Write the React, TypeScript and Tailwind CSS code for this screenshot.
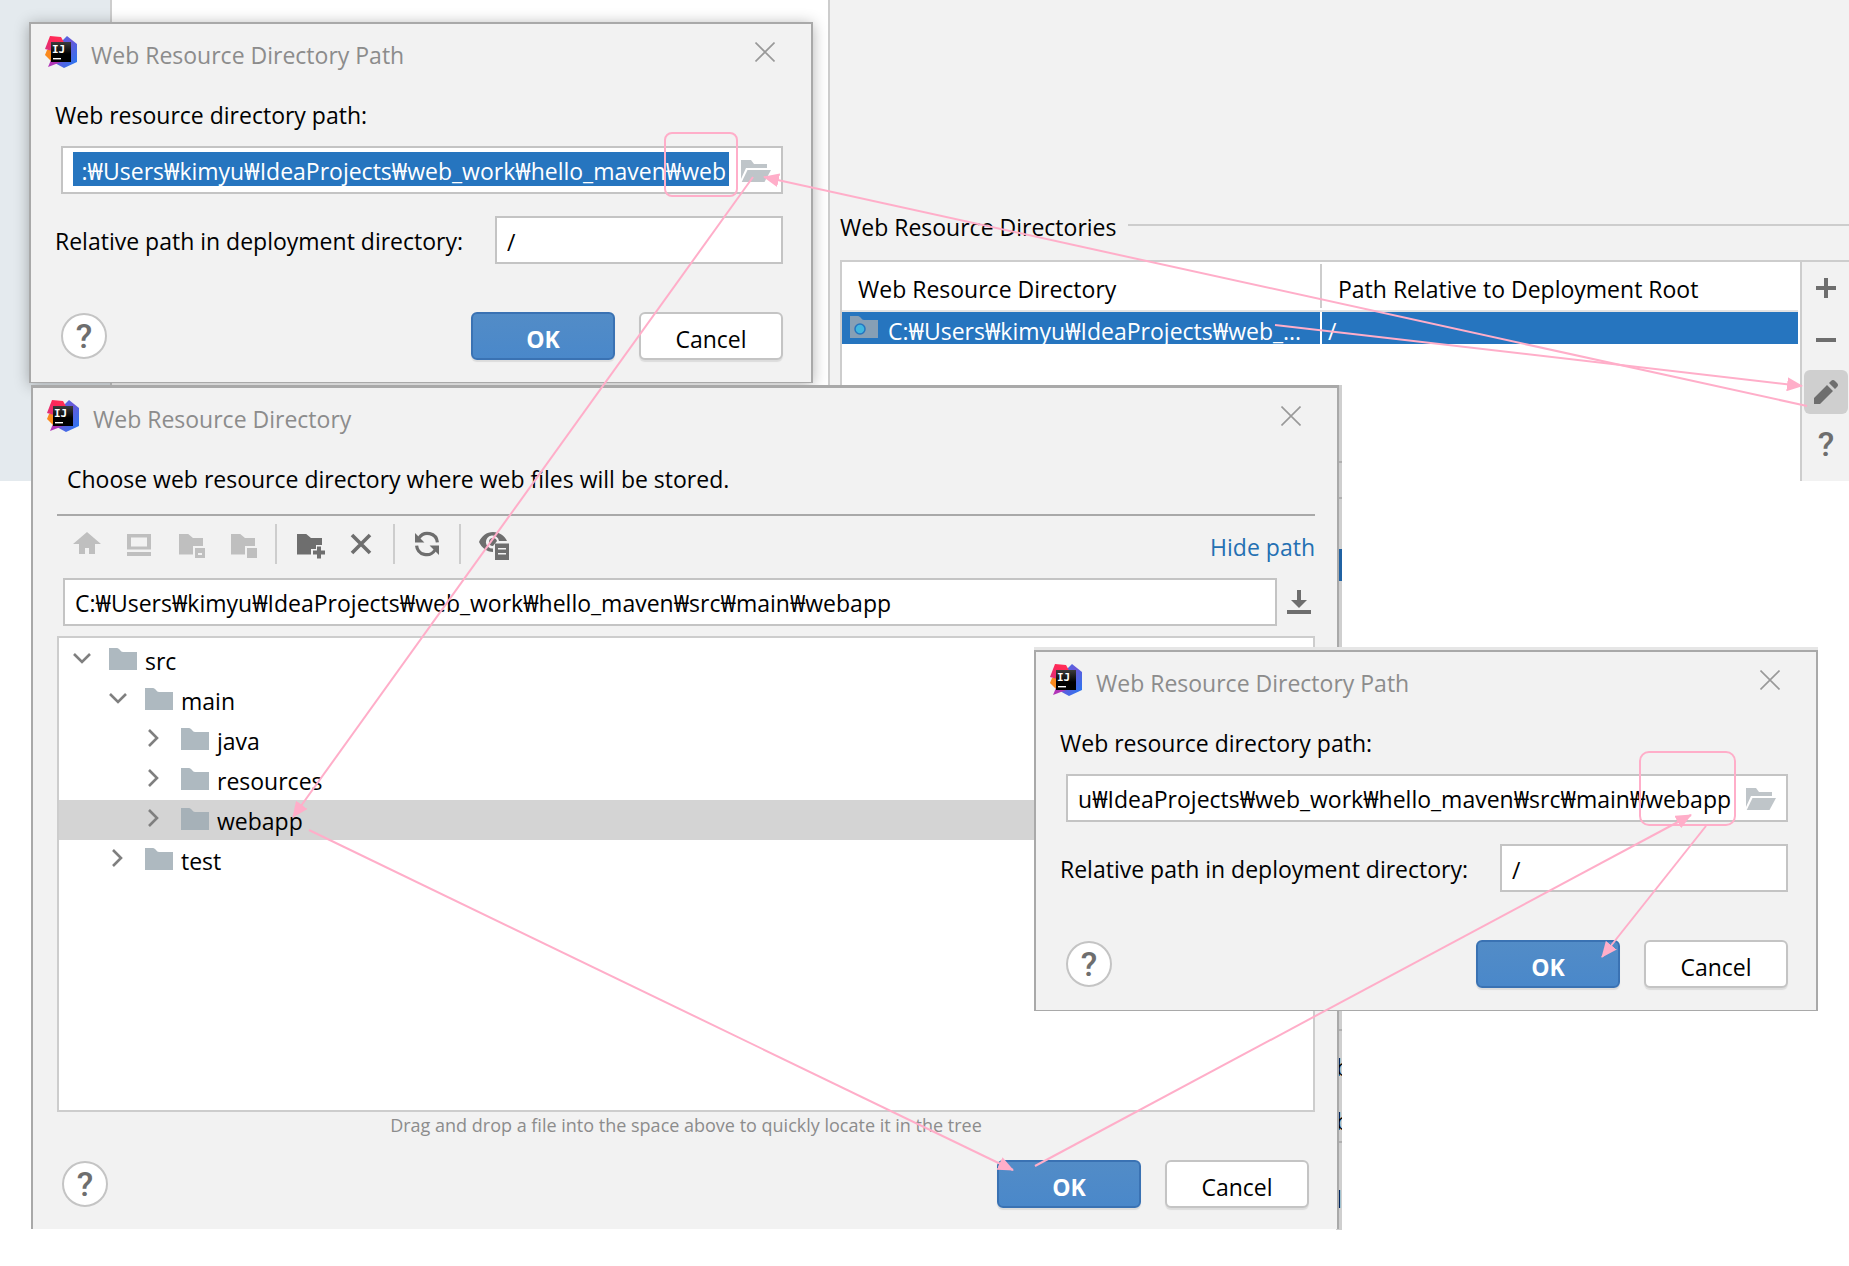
import { useEffect, useRef } from "react";
import type { ReactNode } from "react";

interface TreeRow {
  name: string;
  depth: number;
  open?: boolean;
  selected?: boolean;
}

const tree: TreeRow[] = [
  { name: "src", depth: 0, open: true },
  { name: "main", depth: 1, open: true },
  { name: "java", depth: 2 },
  { name: "resources", depth: 2 },
  { name: "webapp", depth: 2, selected: true },
  { name: "test", depth: 1 },
];

const indent = ["pl-[13px]", "pl-[49px]", "pl-[85px]"];

const arrows = [
  [1275, 325, 1802, 386],
  [1807, 406, 764, 177],
  [753, 177, 293, 817],
  [309, 830, 1013, 1170],
  [1035, 1166, 1691, 815],
  [1706, 826, 1602, 957],
];

function Logo() {
  return (
    <svg width="32" height="32" viewBox="0 0 32 32" aria-hidden="true">
      <defs>
        <linearGradient id="ij-blue" x1="0" y1="0" x2="1" y2="1">
          <stop offset="0" stopColor="#2f7df0" />
          <stop offset="0.45" stopColor="#6b57d8" />
          <stop offset="1" stopColor="#1f7cf5" />
        </linearGradient>
        <linearGradient id="ij-red" x1="0" y1="1" x2="1" y2="0">
          <stop offset="0" stopColor="#d8307f" />
          <stop offset="0.6" stopColor="#ff2857" />
          <stop offset="1" stopColor="#ff3558" />
        </linearGradient>
        <linearGradient id="ij-black" x1="0" y1="0" x2="0" y2="1">
          <stop offset="0" stopColor="#3c3c3c" />
          <stop offset="0.6" stopColor="#000" />
        </linearGradient>
      </defs>
      <path d="M17 5 22 0 32 8V26L19 32 8 26Z" fill="url(#ij-blue)" />
      <path d="M6 24 3 31 16 26Z" fill="#b135b8" />
      <path d="M2 14 0 19 6 25V14Z" fill="#fb8a1e" />
      <path d="M5 0 16 1 20 8 7 15 0 13Z" fill="url(#ij-red)" />
      <path d="M6 6h20v20H6z" fill="url(#ij-black)" />
      <text x="7" y="17" fill="#fff" fontSize="11" fontWeight="700" fontFamily="DejaVu Sans Mono, monospace">
        IJ
      </text>
      <path d="M8 22h8v1.4H8z" fill="#fff" />
    </svg>
  );
}

function Folder() {
  return (
    <svg width="28" height="22" viewBox="0 0 28 22" className="shrink-0" aria-hidden="true">
      <path d="M0 0h8c2.500 0 3.500 4 6 4h14v18H0z" fill="#9aa7b0" fillOpacity="0.8" />
    </svg>
  );
}

function OpenFolder() {
  return (
    <svg width="30" height="22" viewBox="0 0 30 22" aria-hidden="true">
      <path d="M0 0h10l3 4h13v4H5L0 19z" fill="#bfc5c9" />
      <path d="M6.500 10H30l-6.500 12H.7z" fill="#bfc5c9" />
    </svg>
  );
}

function ToolButton({ label, color, children }: { label: string; color: string; children: ReactNode }) {
  return (
    <button aria-label={label} className="size-8">
      <svg width="32" height="32" viewBox="0 0 16 16" fill={color} aria-hidden="true">
        {children}
      </svg>
    </button>
  );
}

function Divider() {
  return <span className="mx-4 h-10 w-0.5 bg-[#cdcdcd]" />;
}

function TitleBar({ title }: { title: string }) {
  return (
    <header className="mt-3 flex h-8 items-start pr-[36px] pl-[14px]">
      <Logo />
      <h2 className="mt-[3px] ml-[14px] flex-1 text-[#8c8c8c]">{title}</h2>
      <button aria-label="Close" className="mt-1.5">
        <svg width="20" height="20" viewBox="0 0 20 20" stroke="#999" strokeWidth="1.600" aria-hidden="true">
          <path d="M.5.5l19 19M19.500.5l-19 19" />
        </svg>
      </button>
    </header>
  );
}

function DialogButtons() {
  return (
    <div className="flex items-center">
      <button
        aria-label="Help"
        className="flex size-[46px] items-center justify-center rounded-full border-2 border-[#c4c4c4] bg-white font-[Roboto] text-[34px] font-medium text-[#6e6e6e]"
      >
        ?
      </button>
      <button className="ml-auto h-12 w-36 rounded-md border-2 border-[#3a72b3] bg-linear-to-b from-[#528cc7] to-[#4a88ca] pt-1.5 font-bold text-white shadow-[0_2px_1px_#dcdcdc]">
        OK
      </button>
      <button className="ml-6 h-12 w-36 rounded-md border-2 border-[#c4c4c4] bg-white pt-1.5 shadow-[0_2px_1px_#dcdcdc]">
        Cancel
      </button>
    </div>
  );
}

interface PathDialogProps {
  id: string;
  path: string;
  selected?: boolean;
}

function PathDialog({ id, path, selected }: PathDialogProps) {
  const input = useRef<HTMLInputElement>(null);

  // long paths show their tail, as after typing
  useEffect(() => {
    if (input.current) input.current.scrollLeft = input.current.scrollWidth;
  }, []);

  return (
    <div className="w-[784px] border-2 border-b border-[#a9a9a9] bg-[#f2f2f2] pb-[22px]">
      <TitleBar title="Web Resource Directory Path" />
      <div className="mt-[31px] pr-[28px] pl-6">
        <label htmlFor={`${id}-path`} className="block">
          Web resource directory path:
        </label>
        <div className="mt-[15px] ml-1.5 flex h-12 items-start border-2 border-[#c4c4c4] bg-white pt-1 pr-[10px] pl-[10px]">
          <input
            id={`${id}-path`}
            ref={input}
            defaultValue={path}
            className={
              selected
                ? "h-[34px] w-[656px] bg-[#2675bf] pt-1 pr-[3px] text-right text-white outline-none"
                : "h-[34px] w-[656px] bg-white pt-1 pr-[3px] text-right outline-none"
            }
          />
          <button aria-label="Browse" className="mt-2 ml-3">
            <OpenFolder />
          </button>
        </div>
        <div className="mt-[22px] flex items-center">
          <label htmlFor={`${id}-rel`} className="pt-0.5">
            Relative path in deployment directory:
          </label>
          <input
            id={`${id}-rel`}
            defaultValue="/"
            className="ml-auto h-12 w-[288px] border-2 border-[#c4c4c4] bg-white px-[10px] pt-[3px] outline-none"
          />
        </div>
        <div className="mt-12 ml-1.5">
          <DialogButtons />
        </div>
      </div>
    </div>
  );
}

function Chevron({ open }: { open?: boolean }) {
  return (
    <svg width="20" height="20" viewBox="0 0 20 20" fill="none" stroke="#7f7f7f" strokeWidth="2.600" aria-hidden="true">
      <path d={open ? "M2 6l8 8 8-8" : "M5 2l8 8-8 8"} />
    </svg>
  );
}

function DirectoryDialog() {
  return (
    <div className="w-[1308px] border-x-2 border-t-3 border-[#a9a9a9] bg-[#f2f2f2] pb-[21px]">
      <TitleBar title="Web Resource Directory" />
      <p className="mt-[31px] ml-[34px]">Choose web resource directory where web files will be stored.</p>
      <div className="mt-[19px] mr-[22px] ml-6 border-t-2 border-[#a9a9a9]">
        <div className="flex h-14 items-center pl-[14px]">
          <div className="flex gap-5">
            <ToolButton label="Home" color="#bfbfbf">
              <path d="M8 2l7 6h-3v5H9v-3H7v3H4V8H1z" />
            </ToolButton>
            <ToolButton label="Desktop" color="#bfbfbf">
              <path fillRule="evenodd" d="M2 3h12v7.700H2zM4 4.700v4.500h8V4.700z" />
              <path d="M2 12h12v2H2z" />
            </ToolButton>
            <ToolButton label="Project directory" color="#bfbfbf">
              <path d="M2 3h4.600L9 5h5v4H9v4.300H2z" />
              <path fillRule="evenodd" d="M10 10h5v5h-5zM11.500 12.500v1H13.500v-1z" />
            </ToolButton>
            <ToolButton label="Module directory" color="#bfbfbf">
              <path d="M2 3h4.600L9 5h5v4H9v4.300H2z" />
              <path d="M10 10h5v5h-5z" />
            </ToolButton>
          </div>
          <Divider />
          <div className="flex gap-5">
            <ToolButton label="New folder" color="#6e6e6e">
              <path d="M2 3h4.600L9 5h5.500v3.500H11.500v2H9v2.800H2z" />
              <path d="M12 9.300h2v2h2v2h-2v2h-2v-2h-2v-2h2z" />
            </ToolButton>
            <ToolButton label="Delete" color="#6e6e6e">
              <path d="M3.500 3.500l9 9M12.500 3.500l-9 9" stroke="#6e6e6e" strokeWidth="1.800" />
            </ToolButton>
          </div>
          <Divider />
          <ToolButton label="Refresh" color="#6e6e6e">
            <path d="M2 2.500V7.200h4.700z" />
            <path d="M14 13.500V8.800H9.300z" />
            <path
              d="M4 5A5 5 0 0 1 13.200 7.200M12 11A5 5 0 0 1 2.800 8.800"
              fill="none"
              stroke="#6e6e6e"
              strokeWidth="1.600"
            />
          </ToolButton>
          <Divider />
          <ToolButton label="Show hidden files" color="#6e6e6e">
            <path
              fillRule="evenodd"
              d="M8 2c3.200 0 5.700 1.800 7 4.500h-4A3.300 3.300 0 1 0 8 10.300V12C4.800 12 2.300 9.800 1 7 2.300 4 4.800 2 8 2z"
            />
            <path d="M8 5a2 2 0 0 1 2 1.500L8 9a2 2 0 0 1 0-4z" />
            <path fillRule="evenodd" d="M9 7.700h7V16H9zM10.500 10v.8h4V10zM10.500 12.500v.8h4v-.8z" />
          </ToolButton>
          <a href="#path" className="mt-1.5 ml-auto text-[#2470b3]">
            Hide path
          </a>
        </div>
        <div className="mt-1.5 ml-1.5 flex items-center">
          <input
            aria-label="Path"
            defaultValue="C:₩Users₩kimyu₩IdeaProjects₩web_work₩hello_maven₩src₩main₩webapp"
            className="h-12 flex-1 border-2 border-[#c4c4c4] bg-white px-[10px] pt-0.5 outline-none"
          />
          <button aria-label="Path history" className="mr-1 ml-[10px]">
            <svg width="24" height="24" viewBox="0 0 24 24" fill="#6e6e6e" aria-hidden="true">
              <path d="M10 0h4v10h6l-8 8-8-8h6zM0 20h24v4H0z" />
            </svg>
          </button>
        </div>
        <ul role="tree" className="mt-[10px] h-[476px] border-2 border-[#cdcdcd] bg-white pt-0.5">
          {tree.map((row) => (
            <li
              key={row.name}
              role="treeitem"
              aria-selected={!!row.selected}
              className={`flex h-10 items-start ${indent[row.depth]} ${row.selected ? "bg-[#d4d4d4]" : ""}`}
            >
              <span className="mt-2 mr-[17px]">
                <Chevron open={row.open} />
              </span>
              <span className="mt-2 mr-2">
                <Folder />
              </span>
              <span className="mt-[5px]">{row.name}</span>
            </li>
          ))}
        </ul>
        <p className="text-center text-[18px] leading-[26px] text-[#8c8c8c]">
          Drag and drop a file into the space above to quickly locate it in the tree
        </p>
        <div className="mt-[22px] mr-1.5 ml-[5px]">
          <DialogButtons />
        </div>
      </div>
    </div>
  );
}

function DirectoriesPanel() {
  return (
    <section className="flex min-w-0 flex-1 flex-col border-l-2 border-[#cdcdcd] bg-[#f2f2f2] pt-[211px] pl-[10px]">
      <div className="flex">
        <h1>Web Resource Directories</h1>
        <span className="mt-[13px] ml-3 h-0.5 flex-1 bg-[#cdcdcd]" />
      </div>
      <div className="mt-[17px] flex flex-1 border-t-2 border-l-2 border-[#cdcdcd]">
        <div className="flex-1 bg-white pr-0.5">
          <table className="w-full table-fixed border-collapse">
            <thead>
              <tr className="border-b-2 border-[#e3e3e3] text-left">
                <th className="w-[480px] p-0 py-0.5 font-normal">
                  <div className="h-11 border-r-2 border-[#cdcdcd] pt-1.5 pl-4 leading-[38px]">Web Resource Directory</div>
                </th>
                <th className="p-0 py-0.5 font-normal">
                  <div className="h-11 pt-1.5 pl-4 leading-[38px]">Path Relative to Deployment Root</div>
                </th>
              </tr>
            </thead>
            <tbody>
              <tr className="bg-[#2675bf] text-white">
                <td className="p-0">
                  <div className="flex h-8 items-start gap-[10px] overflow-hidden border-r-2 border-white pl-2 leading-[38px]">
                    <svg width="28" height="22" viewBox="0 0 28 22" className="mt-1" aria-hidden="true">
                      <path d="M0 0h8c2.500 0 3.500 4 6 4h14v18H0z" fill="#879fb5" />
                      <circle cx="10" cy="13" r="5" fill="#40b6e0" stroke="#2675bf" strokeWidth="1.500" />
                    </svg>
                    C:₩Users₩kimyu₩IdeaProjects₩web_...
                  </div>
                </td>
                <td className="p-0">
                  <div className="h-8 overflow-hidden pl-1.5 leading-[38px]">/</div>
                </td>
              </tr>
            </tbody>
          </table>
        </div>
        <div className="flex w-[49px] flex-col gap-2 border-l-2 border-[#cdcdcd] pt-1 pl-0.5">
          <button aria-label="Add" className="flex size-11 items-center justify-center">
            <svg width="20" height="20" fill="#6e6e6e" aria-hidden="true">
              <path d="M8 0h4v8h8v4h-8v8H8v-8H0V8h8z" />
            </svg>
          </button>
          <button aria-label="Remove" className="flex size-11 items-center justify-center">
            <svg width="20" height="20" fill="#6e6e6e" aria-hidden="true">
              <path d="M0 8h20v4H0z" />
            </svg>
          </button>
          <button aria-label="Edit" className="flex size-11 items-center justify-center rounded-md bg-[#cfcfcf]">
            <svg width="28" height="28" viewBox="0 0 28 28" fill="#6e6e6e" aria-hidden="true">
              <path d="M2 20 15 7l6 6L8 26H2zM17 5l2-2q2-2 4 0l2 2q2 2 0 4l-2 2z" />
            </svg>
          </button>
          <button
            aria-label="Help"
            className="flex size-11 items-center justify-center font-[Roboto] text-[34px] font-medium text-[#6e6e6e]"
          >
            ?
          </button>
        </div>
      </div>
    </section>
  );
}

// sliver of the settings window that stays visible beside the directory dialog
function WindowEdge() {
  return (
    <div className="flex h-[845px] w-1.5 flex-col overflow-hidden bg-[#cfcfcf] text-black">
      <span className="mt-[76px] h-0.5 bg-[#b0b0b0]" />
      <span className="mt-[34px] h-0.5 bg-[#b0b0b0]" />
      <span className="mt-[50px] h-8 bg-[#2062a3]" />
      <span className="mt-[448px] h-0.5 bg-[#b0b0b0]" />
      <span className="mt-5">b</span>
      <span className="mt-[22px]">b</span>
      <span className="mt-1 h-0.5 shrink-0 bg-[#b0b0b0]" />
      <span className="mt-10">l</span>
    </div>
  );
}

export default function App() {
  return (
    <main className="relative min-h-screen w-full overflow-hidden bg-white font-['Open_Sans','Noto_Sans','Noto_Sans_CJK_KR',sans-serif] text-[23px] leading-8 text-black">
      <div className="flex h-[481px]">
        <div className="w-28 border-r-2 border-[#cdcdcd] bg-[#e4eaee]" />
        <div className="w-[716px] bg-white" />
        <DirectoriesPanel />
      </div>

      <div className="absolute top-[22px] left-[29px] shadow-[0_2px_14px_rgba(0,0,0,0.3)]">
        <PathDialog id="before" path=":₩Users₩kimyu₩IdeaProjects₩web_work₩hello_maven₩web" selected />
      </div>
      <div className="absolute top-[385px] left-[1336px]">
        <WindowEdge />
      </div>
      <div className="absolute top-[385px] left-[31px]">
        <DirectoryDialog />
      </div>
      <div className="absolute top-[650px] left-[1034px] shadow-[0_-3px_0_#e6e6e6]">
        <PathDialog id="after" path="C:₩Users₩kimyu₩IdeaProjects₩web_work₩hello_maven₩src₩main₩webapp" />
      </div>

      <svg
        width="1849"
        height="1266"
        viewBox="0 0 1849 1266"
        className="pointer-events-none absolute top-0 left-0 max-w-none"
        fill="none"
        stroke="#ffaec9"
        strokeWidth="2"
        aria-hidden="true"
      >
        <defs>
          <marker id="head" markerUnits="userSpaceOnUse" markerWidth="16" markerHeight="14" refX="15" refY="7" orient="auto">
            <path d="M0 0l16 7-16 7z" fill="#ffaec9" stroke="none" />
          </marker>
        </defs>
        <rect x="665" y="133" width="72" height="63" rx="7" />
        <rect x="1640" y="752" width="95" height="73" rx="9" />
        {arrows.map(([x1, y1, x2, y2]) => (
          <line key={x1} x1={x1} y1={y1} x2={x2} y2={y2} markerEnd="url(#head)" />
        ))}
      </svg>
    </main>
  );
}
